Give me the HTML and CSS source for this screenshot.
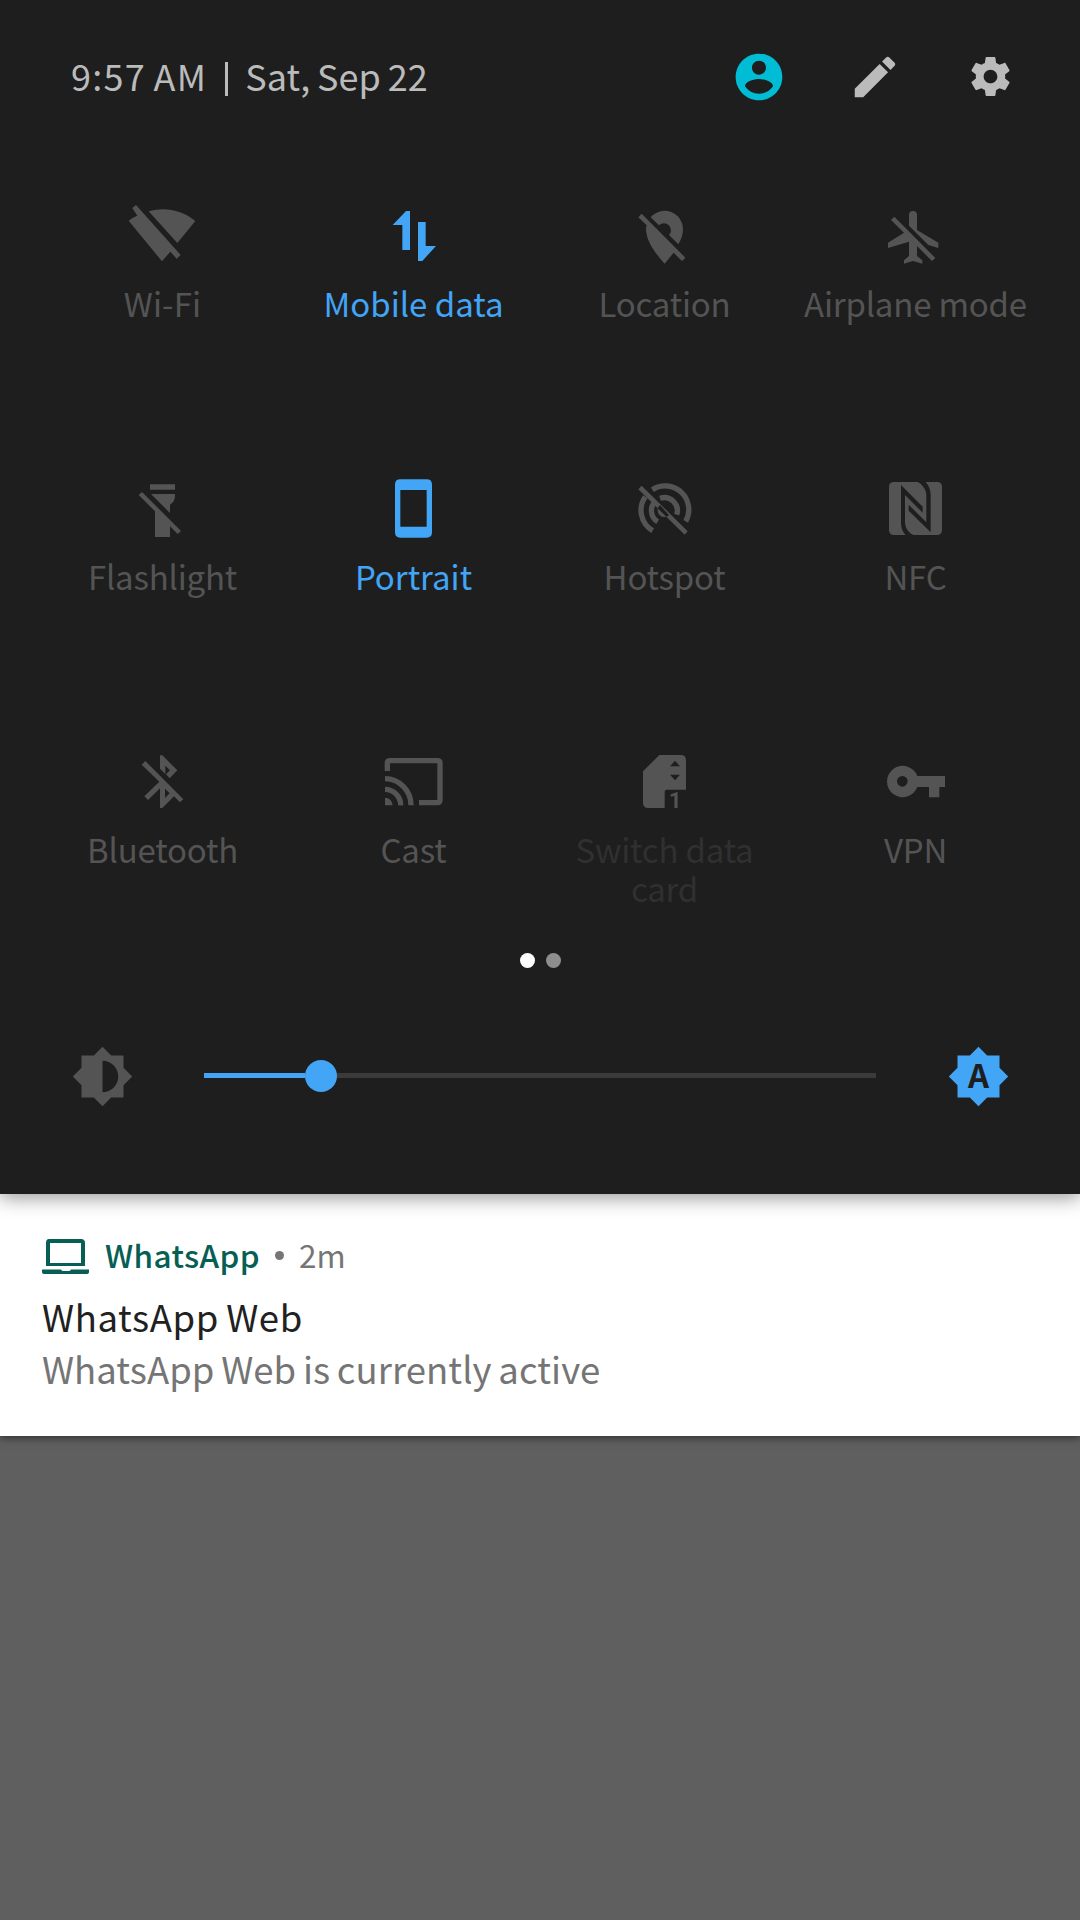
FILE: index.html
```html
<!DOCTYPE html>
<html lang="en"><head><meta charset="utf-8"><title>Quick settings</title><link rel="stylesheet" href="styles.css"></head>
<body>
<main class="screen">
<section class="panel">
<header class="header">
<div class="clock"><span class="time">9:57 AM</span><span class="bar"></span><span class="date">Sat, Sep 22</span></div>
<div class="actions">
<svg class="user" viewBox="0 0 24 24"><path d="M12 2C6.48 2 2 6.48 2 12s4.48 10 10 10 10-4.48 10-10S17.52 2 12 2zm0 3c1.66 0 3 1.34 3 3s-1.34 3-3 3-3-1.34-3-3 1.34-3 3-3zm0 14.2c-2.5 0-4.71-1.28-6-3.22.03-1.99 4-3.08 6-3.08 1.99 0 5.97 1.09 6 3.08-1.29 1.94-3.5 3.22-6 3.22z"/></svg>
<svg class="edit" viewBox="0 0 24 24"><path d="M3 17.25V21h3.75L17.81 9.94l-3.75-3.75L3 17.25zM20.71 7.04c.39-.39.39-1.02 0-1.41l-2.34-2.34c-.39-.39-1.02-.39-1.41 0l-1.83 1.83 3.75 3.75 1.83-1.83z"/></svg>
<svg class="gear" viewBox="0 0 24 24"><path d="M19.43 12.98c.04-.32.07-.64.07-.98s-.03-.66-.07-.98l2.11-1.65c.19-.15.24-.42.12-.64l-2-3.46c-.12-.22-.39-.3-.61-.22l-2.49 1c-.52-.4-1.08-.73-1.69-.98l-.38-2.65C14.46 2.18 14.25 2 14 2h-4c-.25 0-.46.18-.49.42l-.38 2.65c-.61.25-1.17.59-1.69.98l-2.49-1c-.23-.09-.49 0-.61.22l-2 3.46c-.13.22-.07.49.12.64l2.11 1.65c-.04.32-.07.65-.07.98s.03.66.07.98l-2.11 1.65c-.19.15-.24.42-.12.64l2 3.46c.12.22.39.3.61.22l2.49-1c.52.4 1.08.73 1.69.98l.38 2.65c.03.24.24.42.49.42h4c.25 0 .46-.18.49-.42l.38-2.65c.61-.25 1.17-.59 1.69-.98l2.49 1c.23.09.49 0 .61-.22l2-3.46c.12-.22.07-.49-.12-.64l-2.11-1.65zM12 15.5c-1.93 0-3.5-1.57-3.5-3.5s1.57-3.5 3.5-3.5 3.5 1.57 3.5 3.5-1.57 3.5-3.5 3.5z"/></svg>
</div>
</header>
<div class="tiles">
<div class="tile"><svg class="icon" viewBox="180 12 255 255"><path d="M217 54L228 45 362 195 350 206 331 185 306 214 206 92Q218 82 232 77ZM266 64C315 50 365 60 406 93L352 159Z"/></svg><span class="label wide">Wi-Fi</span></div>
<div class="tile on"><svg class="icon" viewBox="933 12 255 255"><path d="M998 105L1038 63H1050V180H1027V105ZM1074 96H1097V168H1128L1087 213H1074Z"/></svg><span class="label">Mobile data</span></div>
<div class="tile"><svg class="icon" viewBox="186 12 255 255"><path d="M272 82A55 55 0 0 1 369 118C369 134 363 150 355 163L327 135A20 20 0 0 0 297 106ZM235 82L245 71 376 203 366 213 341 188 314 221C300 205 258 160 258 118Q258 111 260 106Z"/></svg><span class="label">Location</span></div>
<div class="tile"><svg class="icon" viewBox="939 12 255 255"><path d="M993 90L1003 80 1126 204 1116 213 1071 168V198L1087 211V221L1059 213 1032 221V211L1047 198V155L984 174V158L1032 128ZM1047 107V75A12 12 0 0 1 1071 75V120L1135 158V174L1105 165Z"/></svg><span class="label">Airplane mode</span></div>
<div class="tile"><svg class="icon" viewBox="180 21 255 255"><path d="M270 73H345V89H270ZM236 105L246 96 363 213 353 222 330 199V231H285V154ZM273 102H345V108C345 120 340 128 330 134V159Z"/></svg><span class="label">Flashlight</span></div>
<div class="tile on"><svg class="icon" viewBox="933 21 255 255"><path fill-rule="evenodd" d="M1021 58H1100Q1116 58 1116 74V217Q1116 233 1100 233H1021Q1005 233 1005 217V74Q1005 58 1021 58ZM1021 90V200H1100V90Z"/></svg><span class="label">Portrait</span></div>
<div class="tile"><svg class="icon" viewBox="186 21 255 255"><path d="M235 88L245 77 383 214 374 224ZM300 135A16 16 0 0 0 327 166Z"/><path class="line" d="M277 89A71 71 0 0 1 377 184M256 110A71 71 0 0 0 278 212M300 115A39 39 0 0 1 350 164M288 122A39 39 0 0 0 293 185"/></svg><span class="label">Hotspot</span></div>
<div class="tile"><svg class="icon" viewBox="939 21 255 255"><rect x="987" y="66" width="159" height="159" rx="14"/><path class="cut" d="M1038 226C1027 215 1023 203 1023 185V75L1088 140V158L1035 105V185C1035 203 1045 218 1062 226ZM1096 65C1107 77 1112 89 1112 107V217L1046 152V134L1099 187V107C1099 89 1089 74 1072 65Z"/></svg><span class="label">NFC</span></div>
<div class="tile"><svg class="icon" viewBox="180 30 255 255"><path fill-rule="evenodd" d="M245 104L256 93 370 208 360 217 342 199 307 234H300V175L264 210 253 199 298 155ZM315 176V204L329 190ZM300 76H307L352 121 329 145 318 133 330 121 316 107V132L300 116Z"/></svg><span class="label">Bluetooth</span></div>
<div class="tile"><svg class="icon" viewBox="933 30 255 255"><path d="M975 203A23 23 0 0 1 998 226H975Z"/><path class="line" d="M982 123V99Q982 92 990 92H1132Q1140 92 1140 99V210Q1140 218 1132 218H1077M975 178A47 47 0 0 1 1022 226M975 146A79 79 0 0 1 1053 226"/></svg><span class="label">Cast</span></div>
<div class="tile disabled"><svg class="icon" viewBox="186 30 255 255"><path fill-rule="evenodd" d="M298 75H362Q378 75 378 91V179H320Q314 179 314 185V234H265Q249 234 249 218V124ZM330 109H360L345 92ZM330 134H360L345 151Z"/><text class="sim" x="346" y="234">1</text></svg><span class="label">Switch data card</span></div>
<div class="tile"><svg class="icon" viewBox="939 30 255 255"><path fill-rule="evenodd" d="M1072 138H1155V171H1138V202H1107V171H1072A47 47 0 1 1 1072 138ZM1043 154A16 16 0 1 0 1011 154 16 16 0 1 0 1043 154Z"/></svg><span class="label">VPN</span></div>
</div>
<div class="pages"><i class="page current"></i><i class="page"></i></div>
<div class="brightness">
<svg class="sun" viewBox="0 0 24 24"><path d="M20 15.31L23.31 12 20 8.69V4h-4.69L12 .69 8.69 4H4v4.69L.69 12 4 15.31V20h4.69L12 23.31 15.31 20H20v-4.69zM12 18V6c3.31 0 6 2.69 6 6s-2.69 6-6 6z"/></svg>
<div class="slider"><div class="fill"></div><div class="thumb"></div><div class="rest"></div></div>
<svg class="sun auto" viewBox="0 0 24 24"><path d="M20 15.31L23.31 12 20 8.69V4h-4.69L12 .69 8.69 4H4v4.69L.69 12 4 15.31V20h4.69L12 23.31 15.31 20H20v-4.69z"/><text x="12" y="16.300">A</text></svg>
</div>
</section>
<section class="notification">
<div class="source">
<svg class="laptop" viewBox="0 0 48 36"><path fill-rule="evenodd" d="M7 0H39Q43 0 43 4V27H4V4Q4 0 7 0ZM8 4V24H39V4ZM0 30.500H19Q20 32 21 32H27Q28 32 29 30.500H47V33Q47 35 44 35H3Q0 35 0 33Z"/></svg>
<span class="app">WhatsApp</span><i class="sep"></i><span class="age">2m</span>
</div>
<div class="title">WhatsApp Web</div>
<div class="body">WhatsApp Web is currently active</div>
</section>
</main>
</body></html>
```
FILE: styles.css
```css
* { box-sizing: border-box; }
body { margin: 0; font-family: "Noto Sans CJK SC", "Noto Sans", sans-serif; }
.screen { width: 1080px; height: 1920px; background: #5f5f5f; overflow: hidden; }
.screen svg { display: block; flex: none; fill: currentColor; }
.panel { position: relative; height: 1194px; background: #1e1e1e; color: #545454; box-shadow: 0 4px 18px rgba(0, 0, 0, .4); }
.header { display: flex; justify-content: space-between; align-items: center; height: 153px; padding: 0 66px 0 71px; color: #bbb; font-size: 36px; line-height: 48px; }
.clock { display: flex; align-items: center; padding-bottom: 3px; white-space: nowrap; }
.time { letter-spacing: 1.3px; word-spacing: -2px; }
.date { word-spacing: -1.2px; }
.bar { width: 3px; height: 34px; margin: 8px 17px 0 18px; background: #bbb; }
.actions { display: flex; align-items: center; }
.user { width: 56px; color: #00bcd4; }
.edit { width: 54px; margin: 0 65px 0 61px; }
.gear { width: 47px; }
.tiles { display: grid; grid-template-columns: repeat(4, 251px); grid-auto-rows: 273px; padding: 41px 37px 0; height: 898px; }
.tile { display: flex; flex-direction: column; align-items: center; }
.icon { width: 85px; height: 85px; }
.label { width: 240px; margin-top: 5px; text-align: center; font-size: 33px; line-height: 39px; letter-spacing: -.2px; }
.label.wide { letter-spacing: .1px; }
.on { color: #42a5f5; }
.on .label { letter-spacing: 0; }
.disabled .label { color: #303030; padding: 0 20px; }
.line { fill: none; stroke: currentColor; stroke-width: 16; }
.cut { fill: #1e1e1e; }
.sim { font-family: Roboto, sans-serif; font-size: 65px; font-weight: 700; text-anchor: middle; }
.pages { display: flex; justify-content: center; gap: 11px; margin-top: -98px; height: 15px; }
.page { width: 15px; height: 15px; border-radius: 50%; background: #8e8e8e; }
.page.current { background: #fff; }
.brightness { display: flex; align-items: center; padding: 0 69px 0 71px; margin-top: 77px; }
.sun { width: 63px; height: 63px; }
.auto { color: #42a5f5; }
.auto text { fill: #1e1e1e; font-size: 12.5px; font-weight: 700; text-anchor: middle; }
.slider { display: flex; align-items: center; flex: none; width: 672px; margin: 0 71px 2px 70px; }
.fill { width: 101px; height: 5px; background: #42a5f5; }
.thumb { width: 32px; height: 32px; border-radius: 50%; background: #42a5f5; }
.rest { flex: 1; height: 5px; background: #3a3a3a; }
.notification { height: 242px; padding: 36px 42px 0; background: #fff; color: #757575; box-shadow: 0 2px 8px rgba(0, 0, 0, .5); }
.source { display: flex; align-items: center; height: 52px; font-size: 31.5px; line-height: 48px; white-space: nowrap; }
.source span { padding-bottom: 4px; }
.laptop { width: 48px; height: 36px; margin-top: 1px; color: #075e54; }
.app { margin-left: 15px; color: #075e54; font-weight: 500; letter-spacing: .4px; }
.sep { width: 9px; height: 9px; margin: 0 15px 1px 15px; border-radius: 50%; background: #757575; }
.title, .body { font-size: 36.5px; line-height: 52px; white-space: nowrap; }
.title { margin-top: 9px; color: #212121; letter-spacing: .6px; word-spacing: -1.5px; }
.body { letter-spacing: .05px; word-spacing: -1.5px; }
```
